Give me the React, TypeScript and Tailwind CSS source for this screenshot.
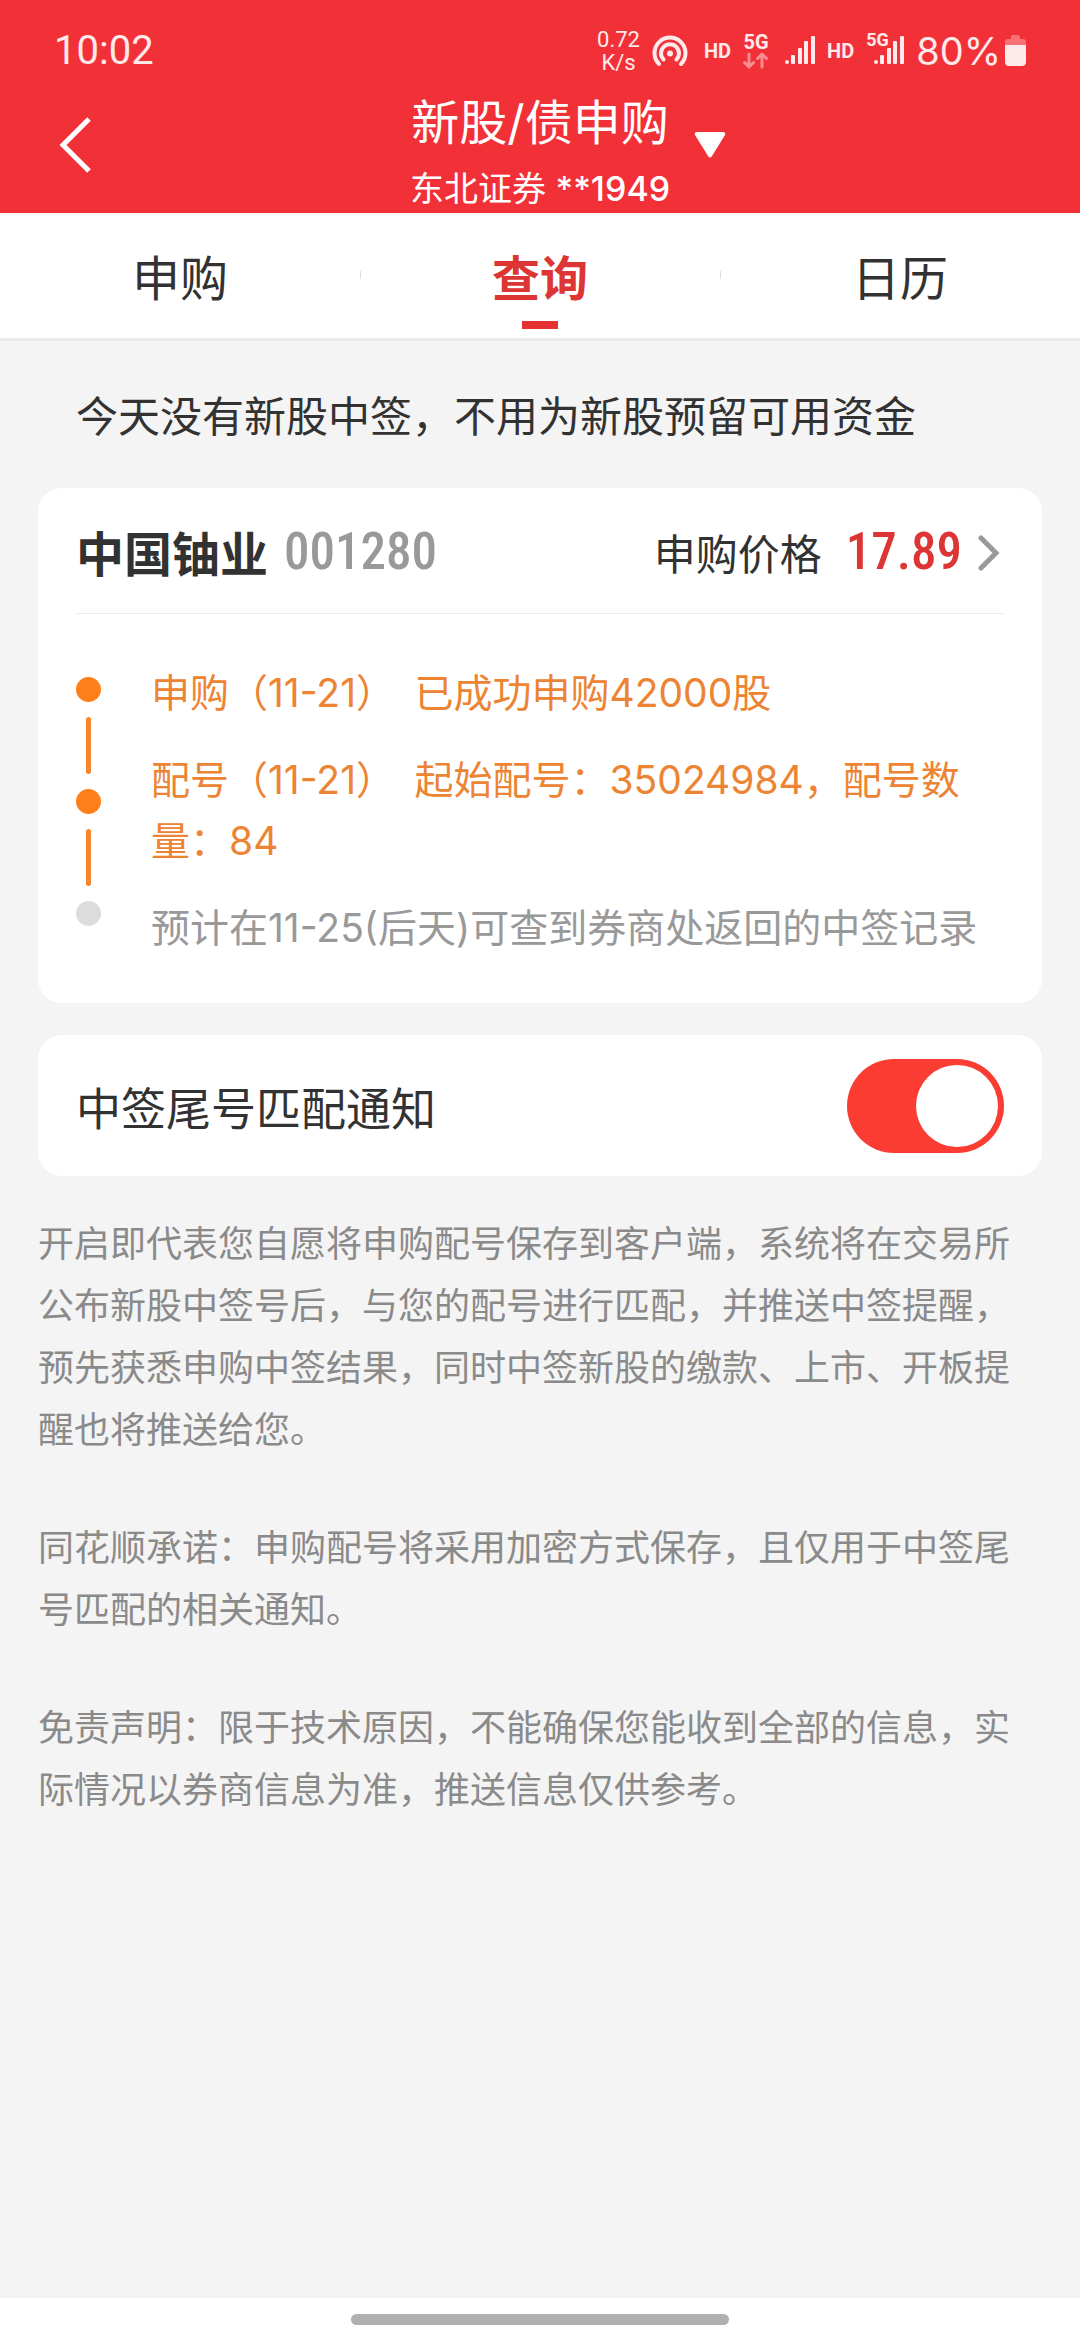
import { useState } from "react";

const tabs = ["申购", "查询", "日历"];

const steps = [
  { text: "申购（11-21）\u2002已成功申购42000股", done: true },
  { text: "配号（11-21）\u2002起始配号：35024984，配号数量：84", done: true },
  { text: "预计在11-25(后天)可查到券商处返回的中签记录", done: false },
];

const notes = [
  "开启即代表您自愿将申购配号保存到客户端，系统将在交易所公布新股中签号后，与您的配号进行匹配，并推送中签提醒，预先获悉申购中签结果，同时中签新股的缴款、上市、开板提醒也将推送给您。",
  "同花顺承诺：申购配号将采用加密方式保存，且仅用于中签尾号匹配的相关通知。",
  "免责声明：限于技术原因，不能确保您能收到全部的信息，实际情况以券商信息为准，推送信息仅供参考。",
];

function SignalBars() {
  return (
    <svg width="30" height="30" viewBox="0 0 30 30" fill="currentColor">
      <circle cx="2" cy="26" r="2" />
      <rect x="6" y="19" width="4" height="9" rx="1" />
      <rect x="13" y="12" width="4" height="16" rx="1" />
      <rect x="19" y="5" width="4" height="23" rx="1" />
      <rect x="26" y="0" width="4" height="28" rx="1" />
    </svg>
  );
}

function StatusBar() {
  return (
    <div className="flex h-[93px] items-center justify-between pt-2 pr-[54px] pl-[54px] font-[Roboto,sans-serif] text-white/90">
      <span className="text-[40px] leading-10">10:02</span>
      <div className="flex items-center gap-3">
        <div className="text-center text-[22px] leading-[23px]">
          <p>0.72</p>
          <p>K/s</p>
        </div>
        <svg width="36" height="32" viewBox="0 0 36 32" fill="none" stroke="currentColor" strokeWidth="4">
          <path d="M7 29A15.5 15.5 0 1 1 29 29" strokeLinecap="round" />
          <path d="M11.500 24.500A9 9 0 1 1 24.500 24.500" strokeLinecap="round" />
          <circle cx="18" cy="18.500" r="3" fill="currentColor" stroke="none" />
        </svg>
        <span className="ml-1 text-xl font-bold">HD</span>
        <div className="flex flex-col items-center">
          <span className="text-xl leading-5 font-bold">5G</span>
          <svg
            className="opacity-50"
            width="26"
            height="17"
            viewBox="0 0 26 17"
            fill="none"
            stroke="currentColor"
            strokeWidth="3"
            strokeLinecap="round"
            strokeLinejoin="round"
          >
            <path d="M6 2v13M1.500 10.500L6 15l4.500-4.500M19 15V2M14.500 6.500L19 2l4.500 4.500" />
          </svg>
        </div>
        <div className="ml-1">
          <SignalBars />
        </div>
        <span className="text-xl font-bold">HD</span>
        <div className="relative pl-2">
          <SignalBars />
          <span className="absolute -top-1 left-0 text-lg leading-4 font-bold">5G</span>
        </div>
        <div className="flex items-center gap-1">
          <span className="font-[Inter,sans-serif] text-[38px] leading-10">80%</span>
          <svg width="21" height="31" viewBox="0 0 21 31" fill="currentColor">
            <path d="M6 2q0-2 2-2h5q2 0 2 2v2h3q3 0 3 3v3H0V7q0-3 3-3h3z" opacity="0.350" />
            <path d="M0 10h21v17q0 4-4 4H4q-4 0-4-4z" />
          </svg>
        </div>
      </div>
    </div>
  );
}

function Header() {
  return (
    <header className="bg-[#f23037] text-white">
      <StatusBar />
      <div className="grid grid-cols-[1fr_auto_1fr] items-center">
        <button type="button" aria-label="返回" className="mb-4 ml-[58px] w-9">
          <svg width="34" height="56" viewBox="0 0 34 56" fill="none" stroke="currentColor" strokeWidth="5">
            <path d="M31 2L5 28l26 26" />
          </svg>
        </button>
        <div className="text-center">
          <h1 className="text-[48px] leading-[60px]">新股/债申购</h1>
          <p className="mt-3 text-[34px] leading-[48px]">
            东北证券 <span className="font-medium">**1949</span>
          </p>
        </div>
        <button type="button" aria-label="切换账户" className="mb-4 ml-6 w-8">
          <svg width="32" height="26" viewBox="0 0 32 26" fill="currentColor">
            <path d="M3 0h26q3 0 2 3L18 24q-2 3-4 0L1 3Q0 0 3 0z" />
          </svg>
        </button>
      </div>
    </header>
  );
}

export default function App() {
  const [active, setActive] = useState("查询");
  const [notify, setNotify] = useState(true);

  return (
    <div className="flex min-h-screen flex-col bg-[#f4f4f4] font-[Inter,'Noto_Sans_CJK_SC',sans-serif] text-[#323232]">
      <Header />
      <nav className="grid grid-cols-3 border-b-[3px] border-[#ebebeb] bg-white">
        {tabs.map((tab, i) => (
          <button
            key={tab}
            type="button"
            onClick={() => setActive(tab)}
            className="relative flex h-[125px] flex-col items-center pt-9 text-[48px] leading-[60px]"
          >
            <span className={tab === active ? "font-bold text-[#dd3434]" : ""}>{tab}</span>
            {tab === active && <span className="mt-3 h-2 w-9 bg-[#e43033]" />}
            {i > 0 && <span className="absolute top-[58px] left-0 h-2 w-px bg-[#dddddd]" />}
          </button>
        ))}
      </nav>

      <main className="grow px-[38px]">
        <p className="px-[38px] pt-[46px] text-[42px] leading-[60px]">
          今天没有新股中签，不用为新股预留可用资金
        </p>

        <section className="mt-[41px] rounded-3xl bg-white px-[38px] pb-[45px]">
          <a href="#" className="flex h-[126px] items-center border-b border-[#ebebeb] pt-1">
            <h2 className="pt-1 text-[48px] font-bold">中国铀业</h2>
            <span className="ml-4 font-['Roboto_Condensed',Roboto,sans-serif] text-[51px] font-medium text-[#999999]">
              001280
            </span>
            <span className="ml-auto pt-1 text-[42px]">申购价格</span>
            <span className="ml-6 font-['Roboto_Condensed',Roboto,sans-serif] text-[51px] font-medium text-[#dd3434]">
              17.89
            </span>
            <svg
              className="mr-1 ml-4"
              width="22"
              height="38"
              viewBox="0 0 22 38"
              fill="none"
              stroke="#999999"
              strokeWidth="5"
              strokeLinecap="round"
            >
              <path d="M3 4l15 15L3 34" />
            </svg>
          </a>
          <div className="flex pt-12">
            <div className="flex w-[25px] shrink-0 flex-col items-center gap-[15px] pt-[15px]">
              <span className="size-[25px] rounded-full bg-[#ff7f1a]" />
              <span className="h-[57px] w-[5px] rounded-full bg-[#f5862d]" />
              <span className="size-[25px] rounded-full bg-[#ff7f1a]" />
              <span className="h-[57px] w-[5px] rounded-full bg-[#f5862d]" />
              <span className="size-[25px] rounded-full bg-[#dcdcdc]" />
            </div>
            <ol className="ml-[50px] flex flex-col gap-[26px] text-[39px] leading-[61px]">
              {steps.map((step) => (
                <li key={step.text} className={step.done ? "text-[#ec8433]" : "text-[#999999]"}>
                  {step.text}
                </li>
              ))}
            </ol>
          </div>
        </section>

        <section className="mt-8 flex h-[141px] items-center justify-between rounded-3xl bg-white px-[38px]">
          <label htmlFor="notify" className="pt-2 text-[45px]">
            中签尾号匹配通知
          </label>
          <input
            id="notify"
            type="checkbox"
            role="switch"
            checked={notify}
            onChange={(e) => setNotify(e.target.checked)}
            className="flex h-[94px] w-[157px] appearance-none items-center rounded-full bg-[#cccccc] px-[6px] before:size-[82px] before:rounded-full before:bg-white checked:justify-end checked:bg-[#fb3c32]"
          />
        </section>

        <div className="mt-[37px] flex flex-col gap-14 text-[36px] leading-[62px] text-[#8a8a8a]">
          {notes.map((note) => (
            <p key={note}>{note}</p>
          ))}
        </div>
      </main>

      <footer className="flex h-[42px] items-center justify-center bg-white">
        <span className="h-[11px] w-[35%] rounded-full bg-[#b0b0b0]" />
      </footer>
    </div>
  );
}
